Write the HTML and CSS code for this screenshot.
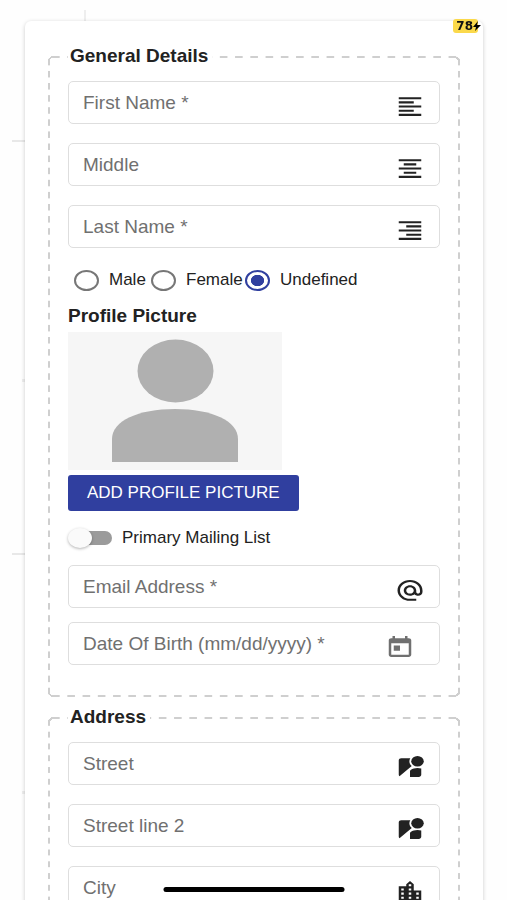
FILE: index.html
```html
<!DOCTYPE html>
<html lang="en">
<head>
<meta charset="utf-8">
<meta name="viewport" content="width=device-width, initial-scale=1">
<title>General Details</title>
<link rel="stylesheet" href="styles.css">
</head>
<body>
<main class="page">
  <form class="card">
    <fieldset class="group">
      <legend class="group-title">General Details</legend>
      <div class="fields">
        <div class="field">
          <label for="first">First Name *</label>
          <input id="first" type="text">
          <svg class="icon" viewBox="0 0 24 24" preserveAspectRatio="none" aria-hidden="true"><path d="M15 15H3v2h12v-2zm0-8H3v2h12V7zM3 13h18v-2H3v2zm0 8h18v-2H3v2zM3 3v2h18V3H3z"/></svg>
        </div>
        <div class="field">
          <label for="middle">Middle</label>
          <input id="middle" type="text">
          <svg class="icon" viewBox="0 0 24 24" preserveAspectRatio="none" aria-hidden="true"><path d="M7 15v2h10v-2H7zm-4 6h18v-2H3v2zm0-8h18v-2H3v2zm4-6v2h10V7H7zM3 3v2h18V3H3z"/></svg>
        </div>
        <div class="field">
          <label for="last">Last Name *</label>
          <input id="last" type="text">
          <svg class="icon" viewBox="0 0 24 24" preserveAspectRatio="none" aria-hidden="true"><path d="M3 21h18v-2H3v2zm6-4h12v-2H9v2zm-6-4h18v-2H3v2zm6-4h12V7H9v2zM3 3v2h18V3H3z"/></svg>
        </div>
      </div>
      <div class="radios">
        <label class="choice"><input class="radio" type="radio" name="gender">Male</label>
        <label class="choice"><input class="radio" type="radio" name="gender">Female</label>
        <label class="choice"><input class="radio" type="radio" name="gender" checked>Undefined</label>
      </div>
      <h2 class="subtitle">Profile Picture</h2>
      <svg class="avatar" viewBox="0 0 214 138" role="img" aria-label="No profile picture">
        <rect width="214" height="138" fill="#f6f6f6"/>
        <ellipse cx="107.500" cy="39" rx="38" ry="31.500" fill="#b0b0b0"/>
        <path d="M44 130V107C44 89 70 77 107 77S170 89 170 107V130Z" fill="#b0b0b0"/>
      </svg>
      <button class="button" type="button">ADD PROFILE PICTURE</button>
      <label class="toggle"><input class="switch" type="checkbox" role="switch">Primary Mailing List</label>
      <div class="fields fields-close">
        <div class="field">
          <label for="email">Email Address *</label>
          <input id="email" type="email">
          <svg class="icon" viewBox="0 0 24 24" preserveAspectRatio="none" aria-hidden="true"><path d="M12 1.95c-5.52 0-10 4.48-10 10s4.480 10 10 10h5v-2h-5c-4.340 0-8-3.660-8-8s3.660-8 8-8 8 3.660 8 8v1.430c0 .79-.71 1.570-1.500 1.570s-1.500-.78-1.500-1.570v-1.430c0-2.760-2.240-5-5-5s-5 2.240-5 5 2.240 5 5 5c1.380 0 2.640-.56 3.540-1.470.65.89 1.770 1.470 2.960 1.470 1.970 0 3.500-1.600 3.500-3.570v-1.430c0-5.520-4.480-10-10-10zm0 13c-1.660 0-3-1.340-3-3s1.340-3 3-3 3 1.340 3 3-1.340 3-3 3z"/></svg>
        </div>
        <div class="field">
          <label for="birth">Date Of Birth (mm/dd/yyyy) *</label>
          <input id="birth" type="text">
          <button class="picker" type="button" aria-label="Choose date"><svg class="icon icon-muted" viewBox="0 0 24 24" preserveAspectRatio="none" aria-hidden="true"><path d="M19 3h-1V1h-2v2H8V1H6v2H5c-1.110 0-1.990.9-1.990 2L3 19c0 1.100.89 2 2 2h14c1.100 0 2-.9 2-2V5c0-1.100-.9-2-2-2zm0 16H5V8h14v11zM7 10h5v5H7z"/></svg></button>
        </div>
      </div>
    </fieldset>
    <fieldset class="group">
      <legend class="group-title">Address</legend>
      <div class="fields">
        <div class="field">
          <label for="street">Street</label>
          <input id="street" type="text">
          <svg class="icon" viewBox="0 0 24 24" preserveAspectRatio="none" aria-hidden="true"><path d="M12.560 14.330c-.34.27-.56.7-.56 1.170V21h7c1.100 0 2-.9 2-2v-5.980c-.94-.33-1.950-.52-3-.52-2.030 0-3.930.7-5.440 1.830z"/><circle cx="18" cy="6" r="5"/><path d="M11.500 6c0-1.080.27-2.100.74-3H5c-1.100 0-2 .9-2 2v14c0 .55.23 1.050.59 1.410l9.820-9.820C12.230 9.420 11.500 7.800 11.500 6z"/></svg>
        </div>
        <div class="field">
          <label for="street2">Street line 2</label>
          <input id="street2" type="text">
          <svg class="icon" viewBox="0 0 24 24" preserveAspectRatio="none" aria-hidden="true"><path d="M12.560 14.330c-.34.27-.56.7-.56 1.170V21h7c1.100 0 2-.9 2-2v-5.980c-.94-.33-1.950-.52-3-.52-2.030 0-3.930.7-5.440 1.830z"/><circle cx="18" cy="6" r="5"/><path d="M11.500 6c0-1.080.27-2.100.74-3H5c-1.100 0-2 .9-2 2v14c0 .55.23 1.050.59 1.410l9.820-9.820C12.230 9.420 11.500 7.800 11.500 6z"/></svg>
        </div>
        <div class="field">
          <label for="city">City</label>
          <input id="city" type="text">
          <svg class="icon" viewBox="0 0 24 24" preserveAspectRatio="none" aria-hidden="true"><path d="M15 11V5l-3-3-3 3v2H3v14h18V11h-6zm-8 8H5v-2h2v2zm0-4H5v-2h2v2zm0-4H5V9h2v2zm6 8h-2v-2h2v2zm0-4h-2v-2h2v2zm0-4h-2V9h2v2zm0-4h-2V5h2v2zm6 12h-2v-2h2v2zm0-4h-2v-2h2v2z"/></svg>
        </div>
      </div>
    </fieldset>
  </form>
</main>
<div class="battery"><span class="battery-level">78</span><svg class="bolt" viewBox="0 0 8 12" aria-hidden="true"><path d="M5 1L0 7h3L2 11 8 5H4z"/></svg></div>
<div class="home-bar"></div>
</body>
</html>
```
FILE: styles.css
```css
* {
  box-sizing: border-box;
}

body {
  margin: 0;
  background: #fefefe;
  color: #222;
  font-family: "Liberation Sans", Arial, sans-serif;
  font-size: 17px;
}

/* Faint line pattern shows around the card edges. */
.page {
  height: 100vh;
  overflow: auto;
  scrollbar-width: none;
  padding: 21px 24px 24px 25px;
  background:
    linear-gradient(#eee, #eee) 84px 10px / 2px 11px no-repeat,
    linear-gradient(#e8e8e8, #e8e8e8) 12px 140px / 13px 2px no-repeat,
    linear-gradient(#e8e8e8, #e8e8e8) 12px 553px / 13px 2px no-repeat,
    linear-gradient(#eee, #eee) 22px 379px / 3px 3px no-repeat,
    linear-gradient(#eee, #eee) 22px 791px / 3px 3px no-repeat;
}

.card {
  padding: 25px 23px 24px;
  border-radius: 6px;
  background: #fff;
  box-shadow: 0 1px 4px rgba(0, 0, 0, 0.2);
}

/* Long dashes across, short dashes down, clipped corners. */
.group {
  --dash: #cfcfcf;
  --row: linear-gradient(90deg, transparent 4px, var(--dash) 4px 11px, transparent 11px);
  --col: linear-gradient(transparent 3px, var(--dash) 3px 9px, transparent 9px);
  --rise: linear-gradient(135deg, transparent 35%, var(--dash) 35% 60%, transparent 60%);
  --fall: linear-gradient(45deg, transparent 35%, var(--dash) 35% 60%, transparent 60%);
  min-width: 0;
  margin: 0 0 10px;
  border: 0;
  padding: 15px 20px 32px;
  background:
    var(--rise) 0 0 / 5px 5px no-repeat,
    var(--fall) 100% 0 / 5px 5px no-repeat,
    var(--fall) 0 100% / 5px 5px no-repeat,
    var(--rise) 100% 100% / 5px 5px no-repeat,
    var(--row) 50% 0 / 15px 2px round no-repeat,
    var(--row) 50% 100% / 15px 2px round no-repeat,
    var(--col) 0 50% / 2px 12px no-repeat round,
    var(--col) 100% 50% / 2px 12px no-repeat round;
}

.group-title {
  padding: 0 4px 0 2px;
  background: #fff;
  font-size: 19px;
  font-weight: 700;
  line-height: 20px;
}

.fields {
  display: grid;
  gap: 19px;
}

.fields-close {
  gap: 14px;
}

.field {
  display: grid;
  grid-template-columns: 1fr auto;
  align-items: center;
  height: 43px;
  padding: 0 14px;
  border: 1px solid #dedede;
  border-radius: 5px;
}

.field label,
.field input {
  grid-area: 1 / 1;
}

.field label {
  color: #707070;
  font-size: 19px;
  line-height: 20px;
}

.field input {
  width: 100%;
  border: 0;
  padding: 0;
  background: transparent;
  font: inherit;
  outline: 0;
}

.field input:not(:focus) {
  color: transparent;
}

.icon {
  display: block;
  width: 30px;
  height: 25px;
  margin-top: 8px;
  fill: #222;
}

.icon-muted {
  fill: #707070;
}

.picker {
  margin-right: 10px;
  border: 0;
  padding: 0;
  background: none;
}

.radios {
  display: grid;
  grid-template-columns: 77px 94px auto;
  margin: 20px 0 14px;
  padding-left: 6px;
}

.choice,
.toggle {
  display: flex;
  align-items: center;
  gap: 10px;
  height: 24px;
  white-space: nowrap;
}

.toggle {
  margin: 15px 0;
}

.radio {
  appearance: none;
  flex: none;
  width: 25px;
  height: 21px;
  margin: 0;
  border: 2px solid #777;
  border-radius: 50%;
}

.radio:checked {
  border-color: #303f9f;
  background: radial-gradient(7px 6px, #303f9f 90%, transparent);
}

.subtitle {
  margin: 0 0 6px;
  font-size: 19px;
  line-height: 20px;
}

.avatar {
  display: block;
  width: 214px;
  height: 138px;
}

.button {
  display: block;
  height: 36px;
  margin-top: 5px;
  border: 0;
  border-radius: 3px;
  padding: 0 19px;
  background: #303f9f;
  color: #fff;
  font-family: inherit;
  font-size: 17px;
}

.switch {
  appearance: none;
  display: grid;
  flex: none;
  align-items: center;
  width: 44px;
  height: 20px;
  margin: 0;
}

.switch::before,
.switch::after {
  content: "";
  grid-area: 1 / 1;
}

.switch::before {
  height: 14px;
  margin-left: 6px;
  border-radius: 8px;
  background: #9b9b9b;
}

.switch::after {
  width: 24px;
  height: 20px;
  border-radius: 50%;
  background: #fafafa;
  box-shadow: 0 1px 3px rgba(0, 0, 0, 0.3);
}

.switch:checked::after {
  justify-self: end;
}

.battery {
  position: fixed;
  top: 19px;
  right: 26px;
  display: flex;
  align-items: center;
}

.battery-level {
  padding: 0 5px 0 3px;
  border-radius: 3px;
  background: #fbd94b;
  color: #111;
  font: 700 12px/14px "DejaVu Sans", sans-serif;
}

.bolt {
  width: 8px;
  height: 12px;
  margin-left: -5px;
}

.home-bar {
  position: fixed;
  bottom: 8px;
  left: 50%;
  width: 181px;
  height: 5px;
  border-radius: 3px;
  background: #000;
  transform: translateX(-50%);
}
```
